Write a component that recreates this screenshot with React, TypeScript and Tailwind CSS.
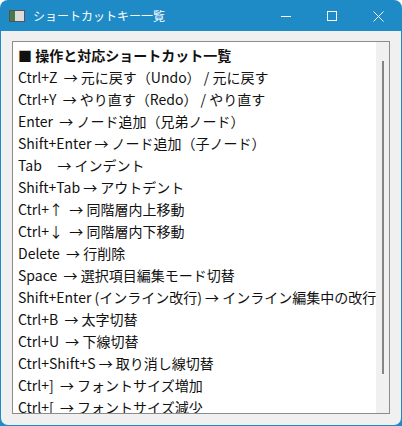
import React from "react";

const lines = [
  "Ctrl+Z  → 元に戻す（Undo） / 元に戻す",
  "Ctrl+Y  → やり直す（Redo） / やり直す",
  "Enter  → ノード追加（兄弟ノード）",
  "Shift+Enter → ノード追加（子ノード）",
  "Tab     → インデント",
  "Shift+Tab → アウトデント",
  "Ctrl+↑  → 同階層内上移動",
  "Ctrl+↓  → 同階層内下移動",
  "Delete  → 行削除",
  "Space  → 選択項目編集モード切替",
  "Shift+Enter (インライン改行) → インライン編集中の改行",
  "Ctrl+B  → 太字切替",
  "Ctrl+U  → 下線切替",
  "Ctrl+Shift+S → 取り消し線切替",
  "Ctrl+]  → フォントサイズ増加",
  "Ctrl+[  → フォントサイズ減少",
];

export default function App() {
  return (
    <div className="w-[402px] h-[426px] bg-[#1e8bc6] p-px rounded-t-[8px] overflow-hidden" style={{ fontFamily: '"Noto Sans CJK JP", "Noto Sans", sans-serif' }}>
      <div className="h-[30px] flex items-center text-white">
        <div className="ml-[8px] w-[16px] h-[12px] bg-[#dcdcdc] border border-[#555] flex">
          <div className="w-[5px] bg-[#4a7a4a]" />
        </div>
        <span className="ml-[8px] text-[12px]">ショートカットキー一覧</span>
        <div className="ml-auto flex items-center">
          <div className="w-[46px] flex justify-center"><div className="w-[10px] h-px bg-white" /></div>
          <div className="w-[46px] flex justify-center"><div className="w-[10px] h-[10px] border border-white" /></div>
          <div className="w-[46px] flex justify-center">
            <svg width="11" height="11" viewBox="0 0 11 11"><path d="M0.5 0.5L10.5 10.5M10.5 0.5L0.5 10.5" stroke="white" strokeWidth="1" /></svg>
          </div>
        </div>
      </div>
      <div className="bg-[#f0f0f0] h-[394px] pt-[10px] px-[11px] rounded-b-[7px]">
        <div className="h-[373px] border border-[#8c8c8c] bg-white flex overflow-hidden">
          <div className="flex-1 pl-[5px] pt-[2px] text-[14px] leading-[22px] text-[#111] whitespace-pre">
            <div className="font-bold">■ 操作と対応ショートカット一覧</div>
            {lines.map((l, i) => <div key={i}>{l}</div>)}
          </div>
          <div className="w-[17px] bg-[#f0f0f0] flex justify-center pt-[19px]">
            <div className="w-[2px] h-[313px] bg-[#858585]" />
          </div>
        </div>
      </div>
    </div>
  );
}
